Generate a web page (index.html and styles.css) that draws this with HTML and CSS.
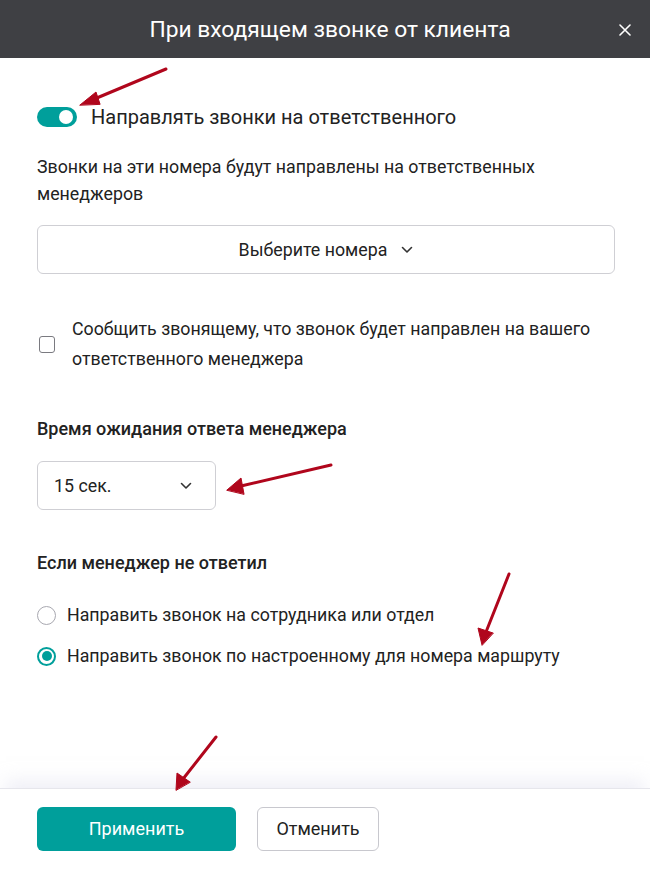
FILE: index.html
```html
<!DOCTYPE html>
<html lang="ru">
<head>
<meta charset="utf-8">
<link rel="stylesheet" href="styles.css">
</head>
<body>
<div class="modal">
  <header class="head">
    <h1 class="title">При входящем звонке от клиента</h1>
    <button class="close" aria-label="Закрыть">
      <svg width="12" height="12" viewBox="0 0 12 12"><path d="M1 1L11 11M11 1L1 11" stroke="#fff" stroke-width="1.6" stroke-linecap="round"/></svg>
    </button>
  </header>
  <main class="body">
    <div class="toggle-row">
      <span class="toggle"><span class="knob"></span></span>
      <span class="toggle-label">Направлять звонки на ответственного</span>
    </div>
    <p class="desc">Звонки на эти номера будут направлены на ответственных менеджеров</p>
    <div class="select wide">
      <span>Выберите номера</span>
      <svg class="chev" width="12" height="8" viewBox="0 0 12 8"><path d="M1.5 1.5L6 6L10.5 1.5" fill="none" stroke="#333" stroke-width="1.6" stroke-linecap="round" stroke-linejoin="round"/></svg>
    </div>
    <div class="check-row">
      <span class="checkbox"></span>
      <span class="check-label">Сообщить звонящему, что звонок будет направлен на вашего ответственного менеджера</span>
    </div>
    <h2 class="section">Время ожидания ответа менеджера</h2>
    <div class="select small">
      <span>15 сек.</span>
      <svg class="chev" width="12" height="8" viewBox="0 0 12 8"><path d="M1.5 1.5L6 6L10.5 1.5" fill="none" stroke="#333" stroke-width="1.6" stroke-linecap="round" stroke-linejoin="round"/></svg>
    </div>
    <h2 class="section s2">Если менеджер не ответил</h2>
    <div class="radios">
      <div class="radio-row"><span class="radio"></span><span>Направить звонок на сотрудника или отдел</span></div>
      <div class="radio-row"><span class="radio on"></span><span>Направить звонок по настроенному для номера маршруту</span></div>
    </div>
  </main>
  <footer class="foot">
    <button class="btn primary">Применить</button>
    <button class="btn ghost">Отменить</button>
  </footer>
  <svg class="arrows" width="650" height="872" viewBox="0 0 650 872">
    <g stroke="#b0061c" stroke-width="3" stroke-linecap="round" fill="#b0061c">
      <line x1="166" y1="69" x2="92" y2="100"/>
      <polygon points="80,105 96,92 100,104" stroke-width="1"/>
      <line x1="331" y1="465" x2="241" y2="486"/>
      <polygon points="227,490 241,478 244,494" stroke-width="1"/>
      <line x1="509" y1="574" x2="486" y2="632"/>
      <polygon points="482,645 478,628 493,633" stroke-width="1"/>
      <line x1="216" y1="737" x2="183" y2="779"/>
      <polygon points="176,790 177,773 190,782" stroke-width="1"/>
    </g>
  </svg>
</div>
</body>
</html>
```
FILE: styles.css
```css
* { box-sizing: border-box; }
html, body { margin: 0; padding: 0; }
body {
  width: 650px;
  height: 872px;
  background: #fff;
  font-family: Roboto, "Liberation Sans", sans-serif;
  color: #222;
  overflow: hidden;
}
.modal {
  position: relative;
  height: 872px;
  display: flex;
  flex-direction: column;
}
.head {
  height: 58px;
  background: #3f4044;
  display: flex;
  align-items: center;
  justify-content: center;
  position: relative;
  padding-left: 10px;
}
.title {
  margin: 0;
  font-size: 22.8px;
  font-weight: 400;
  color: #fff;
}
.close {
  position: absolute;
  right: 18px;
  top: 23px;
  width: 14px;
  height: 14px;
  padding: 0;
  border: 0;
  background: none;
  display: flex;
  align-items: center;
  justify-content: center;
}
.body {
  flex: 1;
  padding: 48px 35px 0 37px;
}
.toggle-row {
  display: flex;
  align-items: center;
  gap: 14px;
  height: 22px;
}
.toggle {
  width: 40px;
  height: 20px;
  border-radius: 10px;
  background: #009f9b;
  position: relative;
  flex: none;
}
.knob {
  position: absolute;
  right: 4px;
  top: 3px;
  width: 14px;
  height: 14px;
  border-radius: 50%;
  background: #fff;
}
.toggle-label {
  font-size: 20px;
  color: #222;
}
.desc {
  margin: 25px 0 0;
  font-size: 17.8px;
  line-height: 27px;
  color: #222;
  width: 540px;
}
.select {
  border: 1px solid #cfcfd4;
  border-radius: 6px;
  display: flex;
  align-items: center;
  font-size: 17.8px;
  color: #222;
}
.select.wide {
  margin-top: 18px;
  height: 49px;
  justify-content: center;
  gap: 14px;
}
.select.small {
  margin-top: 20px;
  width: 179px;
  height: 49px;
  justify-content: space-between;
  padding: 0 23px 0 16px;
}
.chev { display: block; }
.check-row {
  margin-top: 40px;
  display: flex;
  align-items: center;
  gap: 17px;
}
.checkbox {
  width: 16px;
  height: 17px;
  border: 1.5px solid #7a7a80;
  border-radius: 3px;
  margin-left: 2px;
  flex: none;
}
.check-label {
  font-size: 17.8px;
  line-height: 30px;
  width: 530px;
}
.section {
  margin: 43px 0 0;
  font-size: 18px;
  font-weight: 500;
  color: #222;
  line-height: 24px;
}
.s2 { margin-top: 41px; }
.radios {
  margin-top: 28px;
  display: flex;
  flex-direction: column;
  gap: 17px;
}
.radio-row {
  display: flex;
  align-items: center;
  gap: 11px;
  font-size: 17.8px;
  line-height: 24px;
}
.radio {
  width: 19px;
  height: 19px;
  border-radius: 50%;
  border: 1.5px solid #a8a8b0;
  flex: none;
  position: relative;
}
.radio.on {
  border: 2px solid #009f9b;
}
.radio.on::after {
  content: "";
  position: absolute;
  left: 2.5px;
  top: 2.5px;
  width: 10px;
  height: 10px;
  border-radius: 50%;
  background: #009f9b;
}
.foot {
  height: 84px;
  border-top: 1px solid #e6e6ec;
  box-shadow: 0 -14px 16px -6px rgba(225, 225, 240, 0.5);
  display: flex;
  align-items: center;
  gap: 21px;
  padding: 0 37px 4px;
}
.btn {
  height: 44px;
  border-radius: 6px;
  font-family: inherit;
  font-size: 18px;
}
.btn.primary {
  width: 199px;
  background: #009f9b;
  color: #fff;
  border: 0;
}
.btn.ghost {
  width: 122px;
  background: #fff;
  border: 1px solid #c8c8ce;
  color: #222;
}
.arrows {
  position: absolute;
  left: 0;
  top: 0;
  pointer-events: none;
}
```
